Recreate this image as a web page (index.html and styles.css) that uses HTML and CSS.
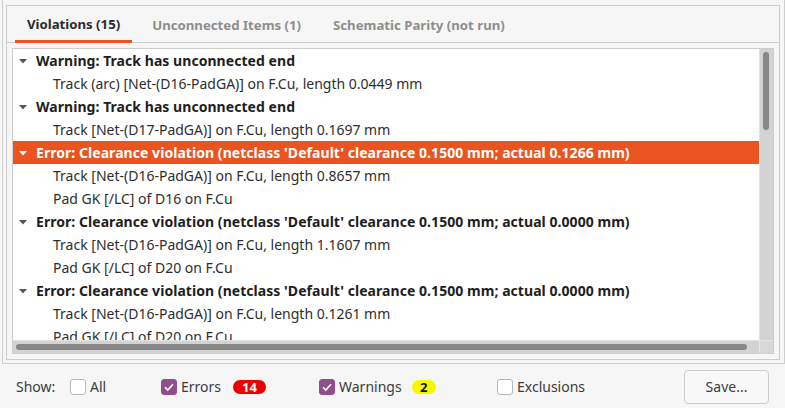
FILE: index.html
```html
<!DOCTYPE html>
<html>
<head>
<meta charset="utf-8">
<link rel="stylesheet" href="styles.css">
</head>
<body>
<div class="frame">
  <div class="notebook">
    <div class="tabs">
      <div class="tab active">Violations (15)</div>
      <div class="tab">Unconnected Items (1)</div>
      <div class="tab">Schematic Parity (not run)</div>
    </div>
    <div class="page">
      <div class="listbox">
        <div class="viewport">
          <div class="row head"><svg class="tri" width="8" height="5" viewBox="0 0 8 5"><path d="M0 0H8L4 4.5Z"/></svg><span>Warning: Track has unconnected end</span></div>
          <div class="row child">Track (arc) [Net-(D16-PadGA)] on F.Cu, length 0.0449 mm</div>
          <div class="row head"><svg class="tri" width="8" height="5" viewBox="0 0 8 5"><path d="M0 0H8L4 4.5Z"/></svg><span>Warning: Track has unconnected end</span></div>
          <div class="row child">Track [Net-(D17-PadGA)] on F.Cu, length 0.1697 mm</div>
          <div class="row head selected"><svg class="tri" width="8" height="5" viewBox="0 0 8 5"><path d="M0 0H8L4 4.5Z"/></svg><span>Error: Clearance violation (netclass 'Default' clearance 0.1500 mm; actual 0.1266 mm)</span></div>
          <div class="row child">Track [Net-(D16-PadGA)] on F.Cu, length 0.8657 mm</div>
          <div class="row child">Pad GK [/LC] of D16 on F.Cu</div>
          <div class="row head"><svg class="tri" width="8" height="5" viewBox="0 0 8 5"><path d="M0 0H8L4 4.5Z"/></svg><span>Error: Clearance violation (netclass 'Default' clearance 0.1500 mm; actual 0.0000 mm)</span></div>
          <div class="row child">Track [Net-(D16-PadGA)] on F.Cu, length 1.1607 mm</div>
          <div class="row child">Pad GK [/LC] of D20 on F.Cu</div>
          <div class="row head"><svg class="tri" width="8" height="5" viewBox="0 0 8 5"><path d="M0 0H8L4 4.5Z"/></svg><span>Error: Clearance violation (netclass 'Default' clearance 0.1500 mm; actual 0.0000 mm)</span></div>
          <div class="row child">Track [Net-(D16-PadGA)] on F.Cu, length 0.1261 mm</div>
          <div class="row child">Pad GK [/LC] of D20 on F.Cu</div>
        </div>
        <div class="vscroll"><div class="vthumb"></div></div>
        <div class="hscroll"><div class="hthumb"></div></div>
        <div class="corner"></div>
      </div>
    </div>
  </div>
</div>
<div class="bottombar">
  <div class="show">Show:</div>
  <div class="opt opt-all"><span class="cb"></span><span class="lbl">All</span></div>
  <div class="opt opt-err"><span class="cb on"><svg width="16" height="16" viewBox="0 0 16 16"><path d="M4 8.2L6.8 11L12 5.2" fill="none" stroke="#fff" stroke-width="1.6"/></svg></span><span class="lbl">Errors</span><span class="badge red">14</span></div>
  <div class="opt opt-warn"><span class="cb on"><svg width="16" height="16" viewBox="0 0 16 16"><path d="M4 8.2L6.8 11L12 5.2" fill="none" stroke="#fff" stroke-width="1.6"/></svg></span><span class="lbl">Warnings</span><span class="badge yellow">2</span></div>
  <div class="opt opt-excl"><span class="cb"></span><span class="lbl">Exclusions</span></div>
  <button class="save">Save...</button>
</div>
</body>
</html>
```
FILE: styles.css
```css
html, body {
  margin: 0;
  padding: 0;
}
body {
  width: 785px;
  height: 408px;
  overflow: hidden;
  background: #f6f6f6;
  font-family: "Noto Sans", "Open Sans", sans-serif;
  font-size: 14px;
  color: #333;
}
.frame {
  box-sizing: border-box;
  margin-left: 2px;
  width: 783px;
  height: 364px;
  border: 1px solid #cfcfcf;
  border-top: none;
  padding: 5px 4px 3px 3px;
}
.notebook {
  box-sizing: border-box;
  width: 774px;
  height: 355px;
  border: 1px solid #cdcdcd;
  display: flex;
  flex-direction: column;
}
.tabs {
  height: 36px;
  border-bottom: 1px solid #cdcdcd;
  display: flex;
  padding-left: 8px;
  gap: 8px;
}
.tab {
  padding: 0 12px;
  display: flex;
  align-items: center;
  font-weight: bold;
  font-size: 13.2px;
  color: #8e8e8e;
  box-sizing: border-box;
  height: 36px;
  padding-top: 2px;
}
.tab.active {
  color: #2b2b2b;
  border-bottom: 3px solid #e95420;
  height: 37px;
  margin-bottom: -1px;
  padding-top: 1px;
}
.page {
  padding: 5px;
}
.listbox {
  box-sizing: border-box;
  width: 762px;
  height: 306px;
  border: 1px solid #cdcdcd;
  background: #fff;
  display: grid;
  grid-template-columns: 746px 14px;
  grid-template-rows: 291px 13px;
}
.viewport {
  overflow: hidden;
  background: #fff;
}
.row {
  height: 23px;
  display: flex;
  align-items: center;
  white-space: nowrap;
}
.head {
  padding-left: 6px;
  font-weight: bold;
  color: #1e1e1e;
  letter-spacing: 0.05px;
}
.head .tri {
  fill: #555;
  margin-right: 9px;
  margin-top: 1px;
}
.child {
  padding-left: 40px;
  color: #2e2e2e;
}
.selected {
  background: #e95420;
  color: #fff;
}
.selected .tri {
  fill: #fff;
}
.vscroll {
  background: #d3d3d3;
  border-left: 1px solid #e2e2e2;
  position: relative;
}
.vthumb {
  position: absolute;
  left: 3px;
  top: 3px;
  width: 6px;
  height: 78px;
  border-radius: 3px;
  background: #878787;
}
.hscroll {
  background: #d3d3d3;
  border-top: 1px solid #e2e2e2;
  position: relative;
}
.hthumb {
  position: absolute;
  left: 3px;
  top: 3px;
  width: 731px;
  height: 6px;
  border-radius: 3px;
  background: #878787;
}
.corner {
  background: #d8d8d8;
  border-left: 1px solid #e6e6e6;
  border-top: 1px solid #e6e6e6;
}
.bottombar {
  height: 44px;
  display: flex;
  align-items: center;
  padding-top: 1px;
  box-sizing: border-box;
  color: #3c3c3c;
}
.show {
  width: 54px;
  padding-left: 16px;
}
.opt {
  display: flex;
  align-items: center;
}
.opt-all { width: 91px; }
.opt-err { width: 158px; }
.opt-warn { width: 178px; }
.opt-excl { width: 120px; }
.cb {
  box-sizing: border-box;
  width: 16px;
  height: 16px;
  border: 1px solid #b8b8b8;
  border-radius: 3px;
  background: #fff;
  margin-right: 4px;
  display: flex;
}
.cb.on {
  background: #924d8b;
  border-color: #924d8b;
}
.cb.on svg {
  margin: -1px;
}
.badge {
  height: 14px;
  border-radius: 7px;
  font-weight: bold;
  font-size: 13px;
  line-height: 14px;
  text-align: center;
}
.badge.red {
  background: #ee0000;
  color: #fff;
  width: 33px;
  margin-left: 12px;
}
.badge.yellow {
  background: #f7f700;
  color: #111;
  width: 24px;
  margin-left: 10px;
}
.save {
  margin-left: auto;
  margin-right: 16px;
  width: 85px;
  height: 34px;
  border: 1px solid #cdcdcd;
  border-radius: 4px;
  background: #f8f8f8;
  font-family: inherit;
  font-size: 14px;
  color: #3c3c3c;
}
```
